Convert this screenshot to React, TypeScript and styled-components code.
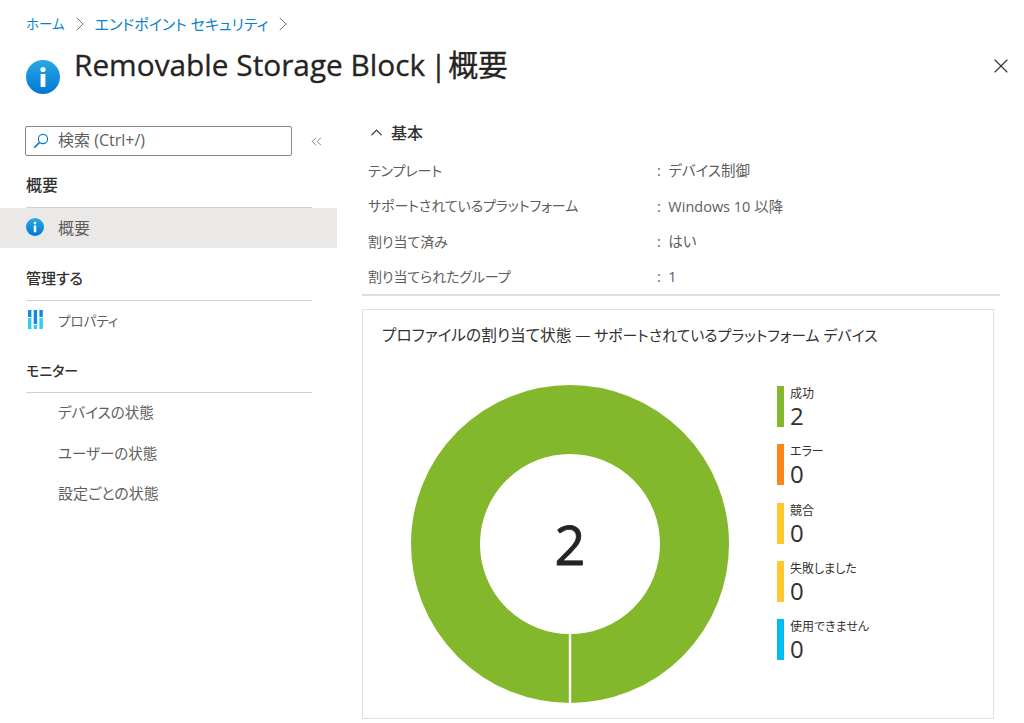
import styled, { createGlobalStyle } from "styled-components";
import { ChevronRight, ChevronUp, ChevronsLeft, X } from "lucide-react";

const GlobalStyle = createGlobalStyle`
  html, body {
    margin: 0;
    padding: 0;
    background: #fff;
  }
  body {
    font-family: "Open Sans", "Noto Sans CJK JP", sans-serif;
    font-feature-settings: "palt";
    color: #323130;
  }
`;

const InfoIcon = ({ size }: { size: number }) => (
  <svg width={size} height={size} viewBox="0 0 34 34">
    <defs>
      <linearGradient id={`info${size}`} x1="0" y1="0" x2="0" y2="1">
        <stop offset="0" stopColor="#2aa8e6" />
        <stop offset="1" stopColor="#0078d4" />
      </linearGradient>
    </defs>
    <circle cx="17" cy="17" r="17" fill={`url(#info${size})`} />
    <circle cx="17" cy="9.5" r="2.6" fill="#fff" />
    <rect x="14.6" y="14" width="4.8" height="13" rx="0.6" fill="#fff" />
  </svg>
);

const SearchIcon = () => (
  <svg width="16" height="16" viewBox="0 0 16 16" fill="none" stroke="#0078d4">
    <circle cx="10" cy="6" r="4.6" strokeWidth="1.1" />
    <line x1="6.6" y1="9.4" x2="1.2" y2="14.8" strokeWidth="1.6" />
  </svg>
);

const PropertyIcon = () => (
  <svg width="15" height="19" viewBox="0 0 15 19">
    <rect x="0" width="3.4" height="7" fill="#1488e0" />
    <rect x="0" y="8" width="3.4" height="11" fill="#2bd0f0" />
    <rect x="5.7" width="3.4" height="14" fill="#1488e0" />
    <rect x="5.7" y="15" width="3.4" height="4" fill="#2bd0f0" />
    <rect x="11.4" width="3.4" height="7" fill="#1488e0" />
    <rect x="11.4" y="8" width="3.4" height="11" fill="#2bd0f0" />
  </svg>
);

const Donut = () => (
  <svg width="318" height="318" viewBox="-159 -159 318 318">
    <circle r="124.5" fill="none" stroke="#84b82c" strokeWidth="69" />
    <line x1="0" y1="88" x2="0" y2="160" stroke="#fff" strokeWidth="2.4" />
  </svg>
);

const legend = [
  { label: "成功", value: 2, color: "#84b82c" },
  { label: "エラー", value: 0, color: "#ff8419" },
  { label: "競合", value: 0, color: "#ffc82e" },
  { label: "失敗しました", value: 0, color: "#ffc82e" },
  { label: "使用できません", value: 0, color: "#00bcf0" },
];

const basics = [
  { label: "テンプレート", value: "デバイス制御" },
  { label: "サポートされているプラットフォーム", value: "Windows 10 以降" },
  { label: "割り当て済み", value: "はい" },
  { label: "割り当てられたグループ", value: "1" },
];

export default function App() {
  return (
    <Page>
      <GlobalStyle />
      <Breadcrumb>
        <Crumb $size={13.5}>ホーム</Crumb>
        <ChevronRight size={24} strokeWidth={0.9} color="#605e5c" />
        <Crumb $size={15}>エンドポイント セキュリティ</Crumb>
        <ChevronRight size={24} strokeWidth={0.9} color="#605e5c" />
      </Breadcrumb>
      <Header>
        <HeaderIcon>
          <InfoIcon size={34} />
        </HeaderIcon>
        <Title>
          Removable Storage Block<TitleSuffix>| 概要</TitleSuffix>
        </Title>
        <Close>
          <X size={24} strokeWidth={1.1} color="#323130" />
        </Close>
      </Header>
      <Body>
        <Sidebar>
          <SearchRow>
            <SearchBox>
              <SearchIcon />
              <SearchText>検索 (Ctrl+/)</SearchText>
            </SearchBox>
            <ChevronsLeft size={17} strokeWidth={1.1} color="#605e5c" />
          </SearchRow>
          <SectionTitle $top={19} $size={16}>
            概要
          </SectionTitle>
          <NavItem $active $size={16}>
            <NavIcon>
              <InfoIcon size={18} />
            </NavIcon>
            概要
          </NavItem>
          <SectionTitle $top={20} $size={15}>
            管理する
          </SectionTitle>
          <NavItem $size={13.5}>
            <NavIcon $inset={2}>
              <PropertyIcon />
            </NavIcon>
            プロパティ
          </NavItem>
          <SectionTitle $top={19}>モニター</SectionTitle>
          <NavItem $size={14.5}>
            <NavIcon />
            デバイスの状態
          </NavItem>
          <NavItem $size={14.5}>
            <NavIcon />
            ユーザーの状態
          </NavItem>
          <NavItem $size={15}>
            <NavIcon />
            設定ごとの状態
          </NavItem>
        </Sidebar>
        <Main>
          <BasicsTitle>
            <ChevronUp size={19} strokeWidth={1.5} color="#323130" />
            基本
          </BasicsTitle>
          <BasicsGrid>
            {basics.map((row) => (
              <BasicsRow key={row.label}>
                <BasicsLabel>{row.label}</BasicsLabel>
                <BasicsValue>:&nbsp; {row.value}</BasicsValue>
              </BasicsRow>
            ))}
          </BasicsGrid>
          <Card>
            <CardTitle>
              プロファイルの割り当て状態 <CardTitleTail>— サポートされているプラットフォーム デバイス</CardTitleTail>
            </CardTitle>
            <CardBody>
              <Donut />
              <DonutValue>2</DonutValue>
              <Legend>
                {legend.map((item) => (
                  <LegendItem key={item.label}>
                    <LegendBar $color={item.color} />
                    <div>
                      <LegendLabel>{item.label}</LegendLabel>
                      <LegendValue>{item.value}</LegendValue>
                    </div>
                  </LegendItem>
                ))}
              </Legend>
            </CardBody>
          </Card>
        </Main>
      </Body>
    </Page>
  );
}

const Page = styled.div`
  width: 1024px;
  height: 723px;
  overflow: hidden;
  background: #fff;
`;

const Breadcrumb = styled.div`
  display: flex;
  align-items: center;
  gap: 3px;
  height: 20px;
  padding: 14px 0 0 26px;
`;

const Crumb = styled.span<{ $size: number }>`
  font-size: ${({ $size }) => $size}px;
  color: #0f7fd0;
  line-height: 20px;
`;

const Header = styled.div`
  display: flex;
  height: 58px;
  padding: 12px 0 0 26px;
`;

const HeaderIcon = styled.div`
  width: 48px;
  padding-top: 14px;
`;

const Title = styled.h1`
  margin: 0;
  font-size: 29.8px;
  font-weight: 400;
  line-height: 38px;
  color: #252423;
  -webkit-text-stroke: 0.3px #252423;
`;

const TitleSuffix = styled.span`
  margin-left: 5px;
  word-spacing: -6px;
`;

const Close = styled.div`
  margin-left: auto;
  padding: 8px 11px 0 0;
`;

const Body = styled.div`
  display: flex;
  padding-top: 22px;
`;

const Sidebar = styled.nav`
  width: 337px;
  flex: none;
`;

const SearchRow = styled.div`
  display: flex;
  align-items: center;
  gap: 16px;
  padding-left: 25px;
`;

const SearchBox = styled.div`
  width: 267px;
  height: 30px;
  display: flex;
  align-items: center;
  gap: 9px;
  padding-left: 7px;
  box-sizing: border-box;
  border: 1px solid #8a8886;
  border-radius: 2px;
`;

const SearchText = styled.span`
  font-size: 16px;
  line-height: 20px;
  padding-bottom: 2px;
  color: #605e5c;
`;

const SectionTitle = styled.div<{ $top: number; $size?: number }>`
  margin: ${({ $top }) => $top}px 25px 0 26px;
  padding-bottom: 10.5px;
  height: 21px;
  line-height: 21px;
  font-size: ${({ $size = 14 }) => $size}px;
  font-weight: 500;
  color: #323130;
  border-bottom: 1px solid #d2d0ce;
`;

const NavItem = styled.div<{ $active?: boolean; $size: number }>`
  display: flex;
  align-items: center;
  height: 38.5px;
  padding: 0 0 2px 26px;
  font-size: ${({ $size }) => $size}px;
  color: #605e5c;
  background: ${({ $active }) => ($active ? "#ebe9e8" : "transparent")};
`;

const NavIcon = styled.span<{ $inset?: number }>`
  display: flex;
  width: ${({ $inset = 0 }) => 32 - $inset}px;
  margin-left: ${({ $inset = 0 }) => $inset}px;
  flex: none;
`;

const Main = styled.main`
  width: 638px;
  margin-left: 25px;
`;

const BasicsTitle = styled.div`
  display: flex;
  align-items: center;
  gap: 5px;
  height: 26px;
  margin-top: -7px;
  padding-left: 5px;
  font-size: 16px;
  font-weight: 500;
  color: #323130;
`;

const BasicsGrid = styled.div`
  padding: 7px 0 0 6px;
  height: 151px;
  box-sizing: border-box;
  border-bottom: 2px solid #e1dfdd;
`;

const BasicsRow = styled.div`
  display: grid;
  grid-template-columns: 289px 1fr;
  height: 35.5px;
  align-items: center;
`;

const BasicsLabel = styled.span`
  font-size: 14px;
  letter-spacing: -0.1px;
  color: #605e5c;
`;

const BasicsValue = styled.span`
  font-size: 14.5px;
  color: #605e5c;
`;

const Card = styled.section`
  width: 632px;
  height: 410px;
  margin-top: 13px;
  box-sizing: border-box;
  border: 1px solid #e1dfdd;
  padding: 13px 19px 0;
`;

const CardTitle = styled.div`
  font-size: 15.7px;
  line-height: 24px;
  color: #323130;
`;

const CardTitleTail = styled.span`
  font-size: 14.9px;
`;

const CardBody = styled.div`
  position: relative;
  display: flex;
  align-items: flex-start;
  padding: 38px 0 0 29px;
`;

const DonutValue = styled.div`
  position: absolute;
  left: 29px;
  top: 38px;
  width: 318px;
  height: 318px;
  display: flex;
  align-items: center;
  justify-content: center;
  font-size: 54px;
  color: #252423;
  -webkit-text-stroke: 0.8px #252423;
`;

const Legend = styled.div`
  display: flex;
  flex-direction: column;
  gap: 17.3px;
  margin: 1px 0 0 48px;
`;

const LegendItem = styled.div`
  display: flex;
  gap: 6px;
  height: 41px;
`;

const LegendBar = styled.span<{ $color: string }>`
  width: 7px;
  height: 41px;
  background: ${({ $color }) => $color};
`;

const LegendLabel = styled.div`
  font-size: 12px;
  line-height: 16px;
  color: #323130;
`;

const LegendValue = styled.div`
  font-size: 24px;
  line-height: 28px;
  color: #323130;
`;
